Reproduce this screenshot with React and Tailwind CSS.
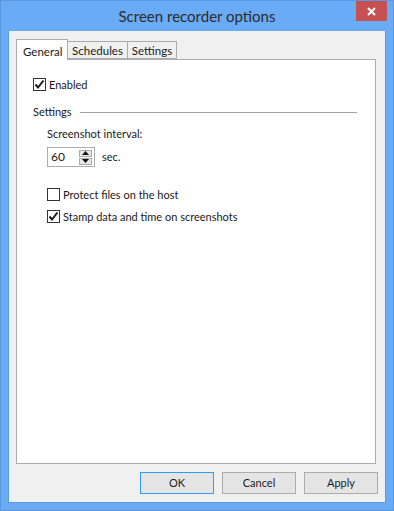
import React from "react";

function Checkbox({ checked }) {
  return (
    <span className="w-[13px] h-[13px] border border-[#333333] bg-white flex items-center justify-center shrink-0">
      {checked && (
        <svg width="11" height="11" viewBox="0 0 11 11">
          <path d="M1.5 5.5 L4 8.5 L9.5 1.5" fill="none" stroke="#1a1a1a" strokeWidth="2" />
        </svg>
      )}
    </span>
  );
}

function CheckRow({ checked, label, className = "" }) {
  return (
    <div className={`flex items-center gap-[3px] h-[13px] ${className}`}>
      <Checkbox checked={checked} />
      <span className="leading-none">{label}</span>
    </div>
  );
}

function Spinner() {
  return (
    <div className="flex items-center h-[20px] mt-[5px] ml-[14px]">
      <div className="w-[48px] h-[20px] border border-[#abadb3] bg-white flex items-center pl-[3px] pr-[2px]">
        <span className="flex-1 text-[12px]">60</span>
        <div className="flex flex-col gap-[1px]">
          <span className="w-[13px] h-[7px] bg-[#e6e6e6] border border-[#acacac] flex items-center justify-center">
            <svg width="7" height="4" viewBox="0 0 7 4">
              <path d="M0 4 L3.5 0 L7 4 Z" fill="#111" />
            </svg>
          </span>
          <span className="w-[13px] h-[7px] bg-[#e6e6e6] border border-[#acacac] flex items-center justify-center">
            <svg width="7" height="4" viewBox="0 0 7 4">
              <path d="M0 0 L3.5 4 L7 0 Z" fill="#111" />
            </svg>
          </span>
        </div>
      </div>
      <span className="ml-[7px]">sec.</span>
    </div>
  );
}

export default function App() {
  const buttons = ["OK", "Cancel", "Apply"];

  return (
    <div
      className="w-[394px] h-[511px] bg-[#6aabf5] border border-[#5a98df] flex flex-col text-[11px] text-[#1a1a1a]"
      style={{ fontFamily: 'Lato, "Liberation Sans", sans-serif' }}
    >
      {/* Title bar */}
      <div className="h-[30px] shrink-0 relative flex items-center justify-center">
        <span className="text-[15px] text-[#2b2b2b] mt-[1px]">Screen recorder options</span>
        <div className="absolute right-[6px] top-0 w-[31px] h-[20px] bg-[#c75050] flex items-center justify-center">
          <svg width="9" height="9" viewBox="0 0 9 9">
            <path d="M1 1 L8 8 M8 1 L1 8" stroke="#fff" strokeWidth="2" />
          </svg>
        </div>
      </div>

      {/* Client area */}
      <div className="flex-1 mx-[7px] mb-[7px] bg-[#f0f0f0] border border-[#5a98df] border-t-0 flex flex-col pl-[7px] pr-[9px] pt-[8px]">
        {/* Tabs */}
        <div className="flex items-end h-[20px] relative z-10">
          <div className="w-[52px] h-[21px] bg-white border border-[#acacac] border-b-0 flex items-start pl-[6px] pt-[3px] -mb-px text-[11.5px]">
            General
          </div>
          <div className="w-[60px] h-[18px] bg-[#f0f0f0] border border-[#acacac] border-l-0 flex items-center justify-center pt-[2px] text-[11.5px]">
            Schedules
          </div>
          <div className="w-[49px] h-[18px] bg-[#f0f0f0] border border-[#acacac] border-l-0 flex items-center justify-center pt-[2px] text-[11.5px]">
            Settings
          </div>
        </div>

        {/* Panel */}
        <div className="h-[405px] bg-white border border-[#acacac] flex flex-col pl-[16px] pt-[18px]">
          <CheckRow checked label="Enabled" />

          <div className="flex items-center h-[16px] mt-[13px] pr-[18px]">
            <span>Settings</span>
            <div className="flex-1 h-px bg-[#a0a0a0] ml-[8px]" />
          </div>

          <div className="h-[16px] mt-[6px] ml-[14px] flex items-center">Screenshot interval:</div>
          <Spinner />

          <CheckRow label="Protect files on the host" className="mt-[21px] ml-[14px]" />
          <CheckRow checked label="Stamp data and time on screenshots" className="mt-[9px] ml-[14px]" />
        </div>

        {/* Buttons */}
        <div className="flex justify-end gap-[8px] mt-[8px] -mr-[2px]">
          {buttons.map((b, i) => (
            <button
              key={b}
              className={`w-[74px] h-[22px] bg-[#e5e5e5] border ${i === 0 ? "border-[#3399ff]" : "border-[#acacac]"} flex items-center justify-center`}
            >
              {b}
            </button>
          ))}
        </div>
      </div>
    </div>
  );
}
